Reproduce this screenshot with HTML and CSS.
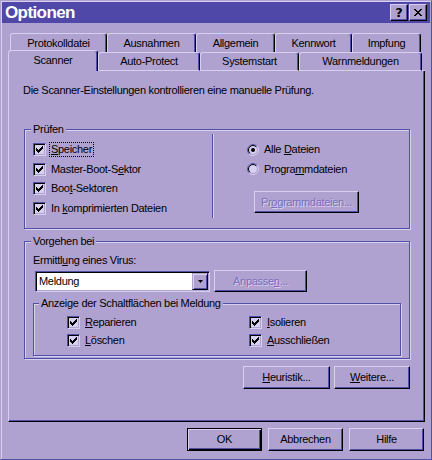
FILE: index.html
```html
<!DOCTYPE html>
<html lang="de">
<head>
<meta charset="utf-8">
<title>Optionen</title>
<link rel="stylesheet" href="styles.css">
</head>
<body>
<div class="window">
  <div class="titlebar">
    <span class="title">Optionen</span>
    <div class="tbtns">
      <span class="tbtn help">?</span>
      <span class="tbtn close"><svg width="8" height="7" viewBox="0 0 8 7"><path d="M0 0h2v1h-2zM6 0h2v1h-2zM1 1h2v1h-2zM5 1h2v1h-2zM2 2h4v1h-4zM3 3h2v1h-2zM2 4h4v1h-4zM1 5h2v1h-2zM5 5h2v1h-2zM0 6h2v1h-2zM6 6h2v1h-2z" fill="#000"/></svg></span>
    </div>
  </div>

  <div class="tabs">
    <div class="tabrow back">
      <div class="tab w97">Protokolldatei</div>
      <div class="tab w89">Ausnahmen</div>
      <div class="tab w79">Allgemein</div>
      <div class="tab w77">Kennwort</div>
      <div class="tab w69">Impfung</div>
    </div>
    <div class="tabrow front">
      <div class="tab sel w90">Scanner</div>
      <div class="tab w102">Auto-Protect</div>
      <div class="tab w99">Systemstart</div>
      <div class="tab w123">Warnmeldungen</div>
      <div class="filler"></div>
    </div>
  </div>

  <div class="panel">
    <div class="desc">Die Scanner-Einstellungen kontrollieren eine manuelle Prüfung.</div>

    <div class="group pruefen">
      <div class="legend">Prüfen</div>
      <div class="cols">
        <div class="col-left">
          <div class="row"><span class="cb"><svg width="7" height="7" viewBox="0 0 7 7"><path d="M0 2h1v3h-1zM1 3h1v3h-1zM2 4h1v3h-1zM3 3h1v3h-1zM4 2h1v3h-1zM5 1h1v3h-1zM6 0h1v3h-1z" fill="#000"/></svg></span><span class="lbl focus"><u>S</u>peicher</span></div>
          <div class="row"><span class="cb"><svg width="7" height="7" viewBox="0 0 7 7"><path d="M0 2h1v3h-1zM1 3h1v3h-1zM2 4h1v3h-1zM3 3h1v3h-1zM4 2h1v3h-1zM5 1h1v3h-1zM6 0h1v3h-1z" fill="#000"/></svg></span><span class="lbl">Master-Boot-S<u>e</u>ktor</span></div>
          <div class="row"><span class="cb"><svg width="7" height="7" viewBox="0 0 7 7"><path d="M0 2h1v3h-1zM1 3h1v3h-1zM2 4h1v3h-1zM3 3h1v3h-1zM4 2h1v3h-1zM5 1h1v3h-1zM6 0h1v3h-1z" fill="#000"/></svg></span><span class="lbl">Boo<u>t</u>-Sektoren</span></div>
          <div class="row"><span class="cb"><svg width="7" height="7" viewBox="0 0 7 7"><path d="M0 2h1v3h-1zM1 3h1v3h-1zM2 4h1v3h-1zM3 3h1v3h-1zM4 2h1v3h-1zM5 1h1v3h-1zM6 0h1v3h-1z" fill="#000"/></svg></span><span class="lbl">In <u>k</u>omprimierten Dateien</span></div>
        </div>
        <div class="sep"></div>
        <div class="col-right">
          <div class="row"><span class="radio"><svg width="12" height="12" viewBox="0 0 12 12"><circle cx="6" cy="6" r="4.5" fill="#D8D0F0"/><circle cx="6" cy="6" r="5.5" fill="none" stroke="#D8D0F0"/><path d="M2.1 9.9A5.5 5.5 0 0 1 9.9 2.1" fill="none" stroke="#5050A8"/><circle cx="6" cy="6" r="4.5" fill="none" stroke="#B0A2D0"/><path d="M2.8 9.2A4.5 4.5 0 0 1 9.2 2.8" fill="none" stroke="#000"/><circle cx="6" cy="6" r="2" fill="#000"/></svg></span><span class="lbl">Alle <u>D</u>ateien</span></div>
          <div class="row"><span class="radio"><svg width="12" height="12" viewBox="0 0 12 12"><circle cx="6" cy="6" r="4.5" fill="#D8D0F0"/><circle cx="6" cy="6" r="5.5" fill="none" stroke="#D8D0F0"/><path d="M2.1 9.9A5.5 5.5 0 0 1 9.9 2.1" fill="none" stroke="#5050A8"/><circle cx="6" cy="6" r="4.5" fill="none" stroke="#B0A2D0"/><path d="M2.8 9.2A4.5 4.5 0 0 1 9.2 2.8" fill="none" stroke="#000"/></svg></span><span class="lbl">Progra<u>m</u>mdateien</span></div>
          <button class="btn disabled prog" type="button">Pr<u>o</u>grammdateien...</button>
        </div>
      </div>
    </div>

    <div class="group vorgehen">
      <div class="legend">Vorgehen bei</div>
      <div class="label">Ermittl<u>u</u>ng eines Virus:</div>
      <div class="comborow">
        <div class="combo">
          <span class="combo-text">Meldung</span>
          <span class="combo-btn"><svg width="5" height="3" viewBox="0 0 5 3"><path d="M0 0h5l-2.5 3z" fill="#000"/></svg></span>
        </div>
        <button class="btn disabled anp" type="button">Anpasse<u>n</u>...</button>
      </div>
      <div class="group inner">
        <div class="legend">Anzeige der Schaltflächen bei Meldung</div>
        <div class="grid">
          <div class="row r18"><span class="cb"><svg width="7" height="7" viewBox="0 0 7 7"><path d="M0 2h1v3h-1zM1 3h1v3h-1zM2 4h1v3h-1zM3 3h1v3h-1zM4 2h1v3h-1zM5 1h1v3h-1zM6 0h1v3h-1z" fill="#000"/></svg></span><span class="lbl"><u>R</u>eparieren</span></div>
          <div class="row r18"><span class="cb"><svg width="7" height="7" viewBox="0 0 7 7"><path d="M0 2h1v3h-1zM1 3h1v3h-1zM2 4h1v3h-1zM3 3h1v3h-1zM4 2h1v3h-1zM5 1h1v3h-1zM6 0h1v3h-1z" fill="#000"/></svg></span><span class="lbl"><u>I</u>solieren</span></div>
          <div class="row r18"><span class="cb"><svg width="7" height="7" viewBox="0 0 7 7"><path d="M0 2h1v3h-1zM1 3h1v3h-1zM2 4h1v3h-1zM3 3h1v3h-1zM4 2h1v3h-1zM5 1h1v3h-1zM6 0h1v3h-1z" fill="#000"/></svg></span><span class="lbl"><u>L</u>öschen</span></div>
          <div class="row r18"><span class="cb"><svg width="7" height="7" viewBox="0 0 7 7"><path d="M0 2h1v3h-1zM1 3h1v3h-1zM2 4h1v3h-1zM3 3h1v3h-1zM4 2h1v3h-1zM5 1h1v3h-1zM6 0h1v3h-1z" fill="#000"/></svg></span><span class="lbl"><u>A</u>usschließen</span></div>
        </div>
      </div>
    </div>

    <div class="panelbtns">
      <button class="btn heur" type="button"><u>H</u>euristik...</button>
      <button class="btn weit" type="button"><u>W</u>eitere...</button>
    </div>
  </div>

  <div class="dlgbtns">
    <button class="btn dlg default" type="button">OK</button>
    <button class="btn dlg" type="button">Abbrechen</button>
    <button class="btn dlg" type="button">Hilfe</button>
  </div>
</div>
</body>
</html>
```

FILE: styles.css
```css
:root {
  --face: #B0A2D0;
  --light: #D8D0F0;
  --shadow: #5050A8;
  --title: #5048A8;
}

html, body {
  margin: 0;
  padding: 0;
}

body {
  width: 432px;
  height: 460px;
  background: var(--face);
  font-family: "Liberation Sans", Arial, sans-serif;
  font-size: 11px;
  letter-spacing: -0.3px;
  color: #000;
}

u {
  text-decoration: underline;
  text-underline-offset: 1px;
}

.window {
  box-sizing: border-box;
  width: 432px;
  height: 460px;
  background: var(--face);
  border: 1px solid;
  border-color: var(--face) var(--shadow) var(--shadow) var(--face);
  box-shadow: inset 1px 1px 0 var(--light);
  padding: 1px;
}

/* title bar */
.titlebar {
  height: 21px;
  background: var(--title);
  display: flex;
  align-items: center;
  justify-content: space-between;
  padding: 0 3px 0 3px;
}

.title {
  color: #fff;
  font-weight: bold;
  font-size: 17px;
  letter-spacing: -0.6px;
  line-height: 21px;
}

.tbtns {
  display: flex;
  gap: 1px;
}

.tbtn {
  box-sizing: border-box;
  width: 18px;
  height: 17px;
  background: var(--face);
  border: 1px solid;
  border-color: var(--light) #000 #000 var(--light);
  box-shadow: inset -1px -1px 0 var(--shadow);
  display: flex;
  align-items: center;
  justify-content: center;
}

.tbtn.help {
  font-family: "DejaVu Sans", "Liberation Sans", sans-serif;
  font-weight: bold;
  font-size: 13px;
  letter-spacing: 0;
  line-height: 14px;
}

/* tabs */
.tabs {
  margin-top: 10px;
}

.tabrow {
  display: flex;
}

.tabrow.back {
  margin-left: 8px;
}

.tabrow.front {
  margin-left: 6px;
  margin-top: -2px;
  width: 417px;
  height: 21px;
  align-items: flex-end;
}

.tab {
  box-sizing: border-box;
  height: 19px;
  background: var(--face);
  border-top: 1px solid var(--light);
  border-left: 1px solid var(--light);
  border-right: 1px solid #000;
  border-radius: 3px 3px 0 0;
  box-shadow: inset -1px 0 0 var(--shadow);
  display: flex;
  align-items: center;
  justify-content: center;
  padding-top: 1px;
  line-height: 13px;
}

.front .tab {
  border-bottom: 1px solid var(--light);
  padding-top: 0;
}

.front .tab.sel {
  height: 21px;
  border-bottom: none;
  padding-bottom: 2px;
}

.filler {
  flex: 1;
  height: 1px;
  background: var(--light);
}

.w97 { width: 97px; }
.w89 { width: 89px; }
.w79 { width: 79px; }
.w77 { width: 77px; }
.w69 { width: 69px; }
.w90 { width: 90px; }
.w102 { width: 102px; }
.w99 { width: 99px; }
.w123 { width: 123px; }

/* panel */
.panel {
  box-sizing: border-box;
  margin-left: 6px;
  width: 417px;
  height: 351px;
  padding-top: 13px;
  border-left: 1px solid var(--light);
  border-right: 1px solid #000;
  border-bottom: 1px solid #000;
  box-shadow: inset -1px -1px 0 var(--shadow);
}

.desc {
  margin: 0 0 0 14px;
  line-height: 13px;
}

.group {
  box-sizing: border-box;
  border: 1px solid var(--shadow);
  box-shadow: inset 1px 1px 0 var(--light), 1px 1px 0 var(--light);
  padding-left: 8px;
}

.legend {
  width: fit-content;
  margin: -7px 0 0 -2px;
  padding: 0 2px;
  background: var(--face);
  line-height: 13px;
  height: 13px;
}

.pruefen {
  margin: 32px 0 0 15px;
  width: 386px;
  height: 100px;
}

.cols {
  display: flex;
  margin-top: 4px;
}

.col-left {
  width: 179px;
}

.row {
  height: 19.5px;
  display: flex;
  align-items: center;
}

.row.r18 {
  height: 18px;
}

.cb {
  box-sizing: border-box;
  flex: none;
  width: 13px;
  height: 13px;
  border: 1px solid;
  border-color: var(--shadow) var(--light) var(--light) var(--shadow);
  box-shadow: inset 1px 1px 0 #000, inset -1px -1px 0 var(--face);
  background: var(--light);
  display: flex;
  align-items: center;
  justify-content: center;
  margin-right: 4px;
}

.cb svg {
  display: block;
}

.radio {
  flex: none;
  width: 12px;
  height: 12px;
  margin-right: 4px;
}

.radio svg {
  display: block;
}

.lbl {
  display: inline-block;
  padding: 0 1px;
  line-height: 13px;
}

.lbl.focus {
  outline: 1px dotted #000;
}

.sep {
  box-sizing: border-box;
  width: 2px;
  height: 84px;
  margin-top: -6px;
  border-left: 1px solid var(--shadow);
  border-right: 1px solid var(--light);
}

.col-right {
  padding-left: 33px;
}

/* buttons */
.btn {
  appearance: none;
  box-sizing: border-box;
  margin: 0;
  padding: 0;
  background: var(--face);
  border: 1px solid;
  border-color: var(--light) #000 #000 var(--light);
  box-shadow: inset -1px -1px 0 var(--shadow);
  font: inherit;
  letter-spacing: inherit;
  color: #000;
  display: flex;
  align-items: center;
  justify-content: center;
  line-height: 13px;
}

.btn.disabled {
  color: #7A70BC;
  text-shadow: 1px 1px 0 var(--light);
}

.btn.prog {
  margin: 12px 0 0 7px;
  width: 105px;
  height: 22px;
}

.vorgehen {
  margin: 12px 0 0 15px;
  width: 386px;
  height: 118px;
}

.label {
  margin-top: 6px;
  line-height: 13px;
}

.comborow {
  display: flex;
  align-items: flex-start;
  margin-top: 3px;
}

.combo {
  box-sizing: border-box;
  margin: 1px 0 0 2px;
  width: 175px;
  height: 21px;
  background: #fff;
  border: 1px solid;
  border-color: var(--shadow) var(--light) var(--light) var(--shadow);
  box-shadow: inset 1px 1px 0 #000, inset -1px -1px 0 var(--face);
  padding: 1px;
  display: flex;
  align-items: center;
}

.combo-text {
  flex: 1;
  padding-left: 2px;
  line-height: 13px;
}

.combo-btn {
  box-sizing: border-box;
  width: 16px;
  height: 17px;
  background: var(--face);
  border: 1px solid;
  border-color: var(--face) #000 #000 var(--face);
  box-shadow: inset 1px 1px 0 var(--light), inset -1px -1px 0 var(--shadow);
  display: flex;
  align-items: center;
  justify-content: center;
}

.combo-btn svg {
  display: block;
}

.btn.anp {
  margin-left: 4px;
  width: 93px;
  height: 22px;
}

.inner {
  margin-top: 11px;
  width: 368px;
  height: 53px;
  padding-left: 0;
}

.inner .legend {
  margin-left: 5px;
}

.grid {
  display: grid;
  grid-template-columns: 182px 1fr;
  margin-top: 3px;
  padding-left: 33px;
}

.grid .cb {
  margin-right: 5px;
}

.grid .lbl {
  padding: 0;
}

.panelbtns {
  display: flex;
  justify-content: flex-end;
  gap: 4px;
  margin: 7px 0 0 15px;
  width: 386px;
}

.btn.heur {
  width: 87px;
  height: 23px;
}

.btn.weit {
  width: 76px;
  height: 23px;
}

.dlgbtns {
  display: flex;
  justify-content: flex-end;
  gap: 6px;
  margin-top: 6px;
  padding-right: 6px;
}

.btn.dlg {
  width: 75px;
  height: 23px;
}

.btn.default {
  border: 1px solid #000;
  box-shadow: inset 1px 1px 0 var(--light), inset -1px -1px 0 #000, inset -2px -2px 0 var(--shadow);
}
```
